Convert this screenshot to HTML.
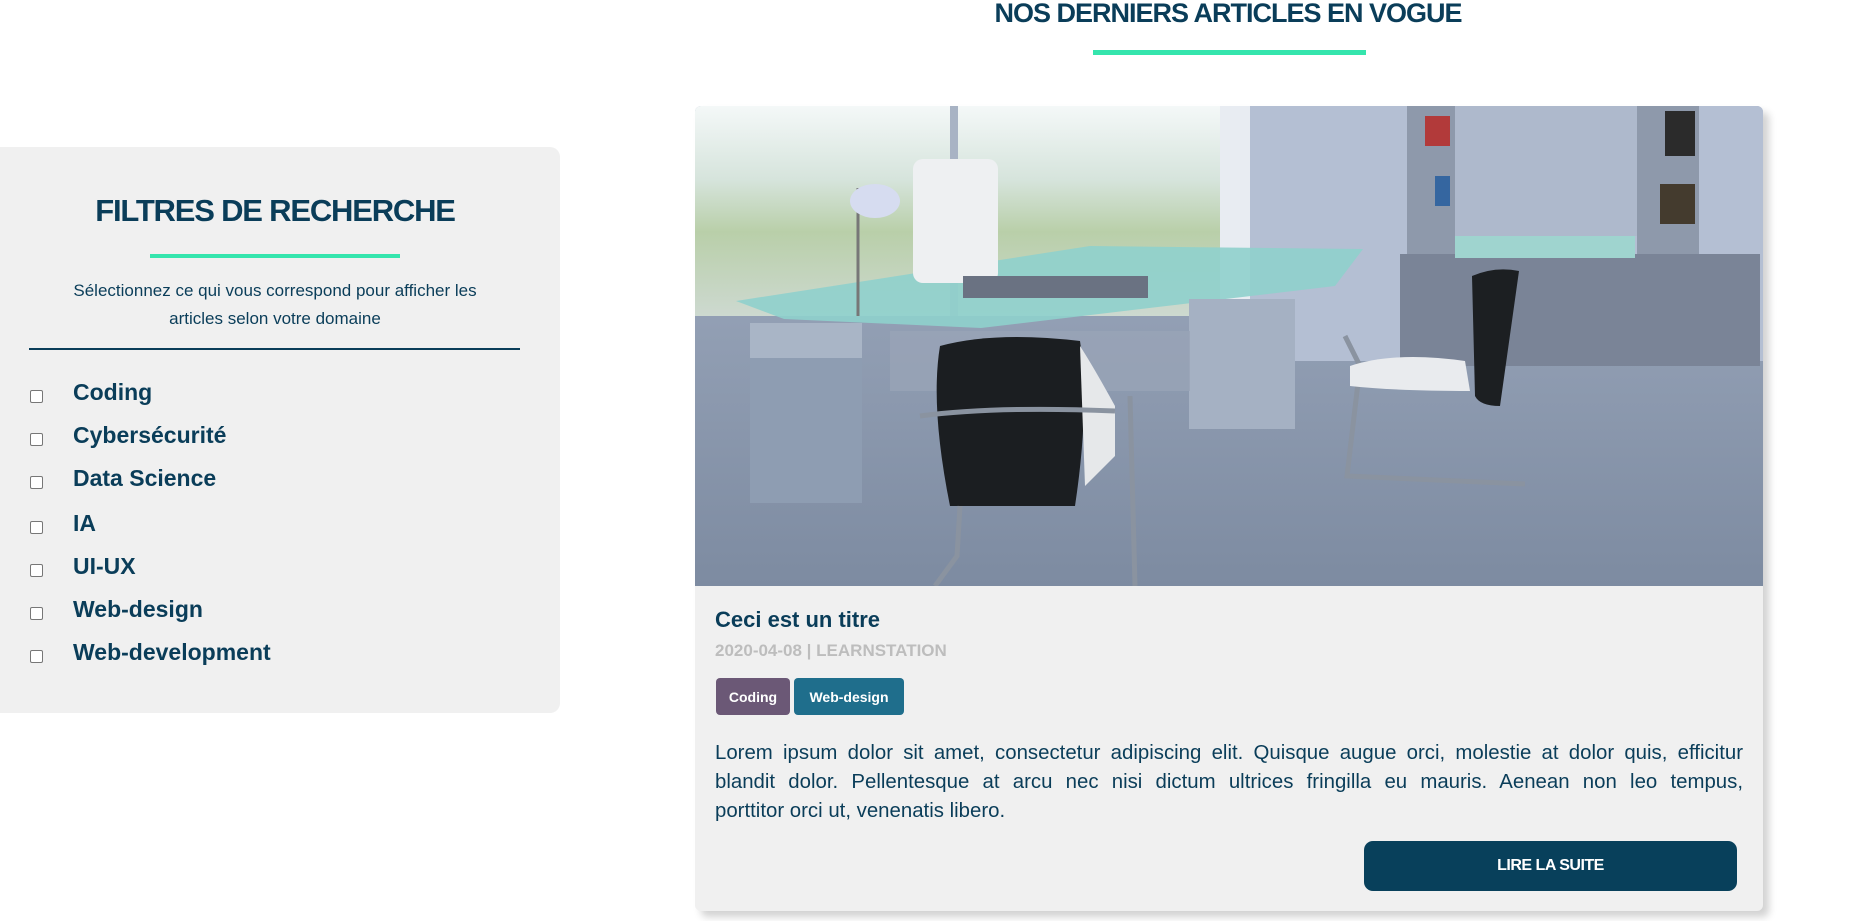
<!DOCTYPE html>
<html><head><meta charset="utf-8"><style>
*{margin:0;padding:0;box-sizing:border-box}
body{width:1876px;height:921px;background:#fff;position:relative;overflow:hidden;font-family:"Liberation Sans",sans-serif;color:#0a3d59}
.abs{position:absolute}
h1{position:absolute;left:0;width:2456px;top:-2px;text-align:center;font-size:27px;font-weight:900;letter-spacing:-1px;color:#0a3d59;white-space:nowrap}
.panel{left:0;top:147px;width:560px;height:566px;background:#f0f0f0;border-radius:0 10px 10px 0}
.ft{left:0;width:550px;top:193px;text-align:center;font-size:31px;font-weight:900;letter-spacing:-1.2px;white-space:nowrap}
.sub{left:45px;width:460px;top:277px;text-align:center;font-size:17px;line-height:28px}
.item{left:30px;height:30px;display:flex;align-items:center}
.cb{width:13px;height:13px;border:1.5px solid #777;border-radius:2px;background:#fff}
.lbl{position:absolute;left:43px;font-family:"Liberation Sans Narrow","Liberation Sans",sans-serif;font-stretch:condensed;font-weight:bold;font-size:23px;white-space:nowrap;top:-2px}
.card{left:695px;top:106px;width:1068px;height:805px;background:#f0f0f0;border-radius:6px;box-shadow:6px 6px 8px rgba(0,0,0,.18);overflow:hidden}
.tag{top:678px;height:37px;border-radius:4px;color:#fff;font-weight:bold;font-size:14px;display:flex;align-items:center;justify-content:center}
.para{left:715px;width:1028px;top:739px;font-size:20.4px;line-height:29px;color:#0a3d59}
.para div{text-align:justify;text-align-last:justify;white-space:nowrap}
.para div.l{text-align-last:left}
.btn{left:1364px;top:841px;width:373px;height:50px;background:#08405b;border-radius:9px;color:#fff;font-weight:900;font-size:16px;letter-spacing:-.5px;display:flex;align-items:center;justify-content:center}
</style></head><body>
<h1>NOS DERNIERS ARTICLES EN VOGUE</h1>
<div class="abs" style="left:1093px;top:50px;width:273px;height:5px;background:#35e5ad"></div>

<div class="abs panel"></div>
<div class="abs ft">FILTRES DE RECHERCHE</div>
<div class="abs" style="left:150px;top:254px;width:250px;height:4px;background:#35e5ad"></div>
<div class="abs sub">Sélectionnez ce qui vous correspond pour afficher les articles selon votre domaine</div>
<div class="abs" style="left:29px;top:348px;width:491px;height:2px;background:#0a3d59"></div>
<div class="abs item" style="top:381px"><div class="cb"></div><span class="lbl">Coding</span></div>
<div class="abs item" style="top:424px"><div class="cb"></div><span class="lbl">Cybersécurité</span></div>
<div class="abs item" style="top:467px"><div class="cb"></div><span class="lbl">Data Science</span></div>
<div class="abs item" style="top:512px"><div class="cb"></div><span class="lbl">IA</span></div>
<div class="abs item" style="top:555px"><div class="cb"></div><span class="lbl">UI-UX</span></div>
<div class="abs item" style="top:598px"><div class="cb"></div><span class="lbl">Web-design</span></div>
<div class="abs item" style="top:641px"><div class="cb"></div><span class="lbl">Web-development</span></div>

<div class="abs card">
<svg width="1068" height="480" viewBox="0 0 1068 480" style="display:block">
<defs>
<linearGradient id="win" x1="0" y1="0" x2="0" y2="1"><stop offset="0" stop-color="#f4f8f8"/><stop offset=".35" stop-color="#d6e4dc"/><stop offset=".6" stop-color="#b9cfa9"/><stop offset="1" stop-color="#cdd9d0"/></linearGradient>
<linearGradient id="fl" x1="0" y1="0" x2="0" y2="1"><stop offset="0" stop-color="#a3afc3"/><stop offset="1" stop-color="#7d8ba1"/></linearGradient>
</defs>
<rect width="1068" height="480" fill="url(#fl)"/>
<rect width="531" height="210" fill="url(#win)"/>
<rect x="255" y="0" width="8" height="210" fill="#a8b3c4"/>
<rect x="525" y="0" width="30" height="210" fill="#e8ecf2"/>
<rect x="555" y="0" width="513" height="255" fill="#b4bfd3"/>
<rect x="712" y="0" width="48" height="150" fill="#8e99ab"/>
<rect x="942" y="0" width="62" height="180" fill="#8e99ab"/>
<rect x="760" y="0" width="182" height="130" fill="#aeb9cc"/>
<rect x="730" y="10" width="25" height="30" fill="#b23a3a"/><rect x="740" y="70" width="15" height="30" fill="#3566a0"/><rect x="970" y="5" width="30" height="45" fill="#2b2b2b"/><rect x="965" y="78" width="35" height="40" fill="#443b2e"/>
<rect x="705" y="148" width="360" height="112" fill="#7a8497"/>
<rect x="760" y="130" width="180" height="22" fill="#9fd4cf"/>
<polygon points="41,195 395,140 668,143 640,180 286,222 89,213" fill="#8fd0cc" opacity=".9"/>
<rect x="55" y="217" width="112" height="180" fill="#8e9db2"/>
<rect x="55" y="217" width="112" height="35" fill="#a9b5c6"/>
<rect x="494" y="193" width="106" height="130" fill="#a5b1c3"/>
<rect x="195" y="225" width="300" height="60" fill="#98a4b6" opacity=".8"/>
<rect x="218" y="53" width="85" height="124" rx="10" fill="#eef0f2"/>
<rect x="268" y="170" width="185" height="22" fill="#6a7282"/>
<line x1="163" y1="82" x2="163" y2="210" stroke="#777" stroke-width="3"/>
<ellipse cx="180" cy="95" rx="25" ry="17" fill="#d6dcf0"/>
<path d="M650 230 L665 260 L652 370 L830 378" stroke="#8a93a0" stroke-width="5" fill="none"/>
<path d="M655 260 Q700 245 770 255 L775 285 Q700 285 655 280 Z" fill="#e9ebee"/>
<path d="M777 170 Q800 160 824 165 L805 300 Q785 300 780 290 Z" fill="#1c1f22"/>
<path d="M245 240 Q300 225 385 235 Q395 300 380 400 L255 400 Q235 300 245 240 Z" fill="#1b1e21"/>
<path d="M385 240 Q398 260 420 300 L420 350 L390 380 Z" fill="#e6e8ea"/>
<path d="M225 310 Q300 300 420 305" stroke="#8a93a0" stroke-width="5" fill="none"/>
<path d="M265 400 L262 450 L240 480 M435 290 L440 480" stroke="#8a93a0" stroke-width="5" fill="none"/>
</svg>
</div>
<div class="abs" style="left:715px;top:607px;font-size:22px;font-weight:bold">Ceci est un titre</div>
<div class="abs" style="left:715px;top:641px;font-size:17px;font-weight:bold;color:#bdbdbd">2020-04-08 | LEARNSTATION</div>
<div class="abs tag" style="left:716px;width:74px;background:#6b5876">Coding</div>
<div class="abs tag" style="left:794px;width:110px;background:#1f6e8c">Web-design</div>
<div class="abs para"><div>Lorem ipsum dolor sit amet, consectetur adipiscing elit. Quisque augue orci, molestie at dolor quis, efficitur</div><div>blandit dolor. Pellentesque at arcu nec nisi dictum ultrices fringilla eu mauris. Aenean non leo tempus,</div><div class="l">porttitor orci ut, venenatis libero.</div></div>
<div class="abs btn">LIRE LA SUITE</div>
</body></html>
